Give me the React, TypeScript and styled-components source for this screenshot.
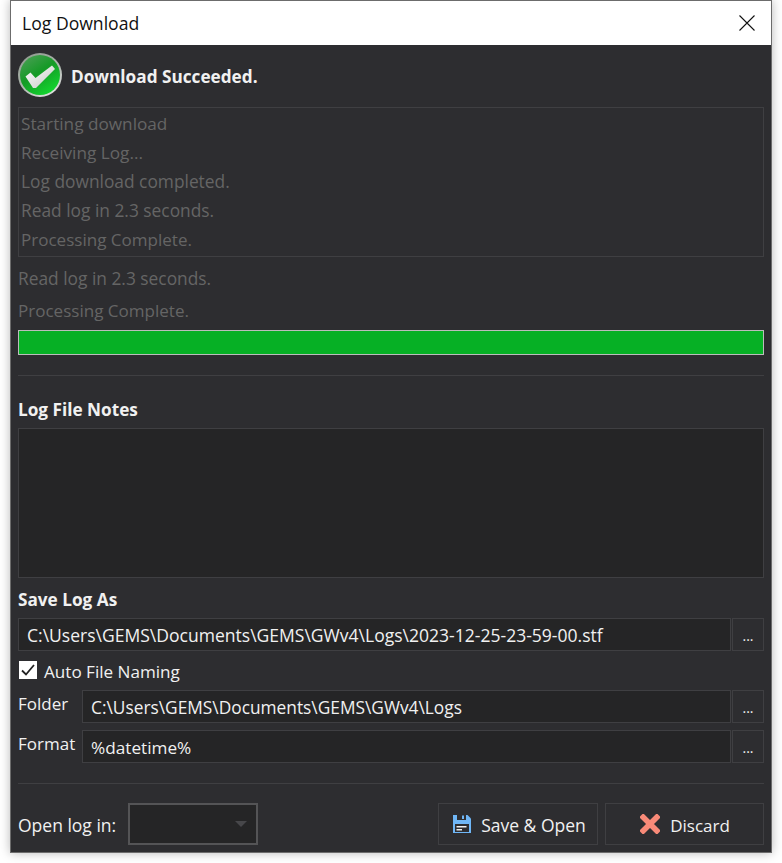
import React from "react";
import styled, { createGlobalStyle } from "styled-components";

const Global = createGlobalStyle`
  html, body { margin: 0; padding: 0; background: #fff; }
  body { font-family: "Open Sans", "Noto Sans", "Liberation Sans", sans-serif; font-size: 17px; }
`;

const Page = styled.div`
  width: 782px;
  height: 863px;
  padding: 0 10px;
  box-sizing: border-box;
  overflow: hidden;
  background: #fff;
`;

const Window = styled.div`
  width: 762px;
  height: 853px;
  box-sizing: border-box;
  border: 1px solid #6c6c6c;
  background: #2d2d30;
  display: flex;
  flex-direction: column;
  box-shadow: 0 0 10px rgba(0, 0, 0, 0.28);
`;

const TitleBar = styled.div`
  height: 44px;
  flex: none;
  background: #fff;
  color: #111;
  display: flex;
  align-items: center;
  justify-content: space-between;
  padding: 0 16px 0 11px;
  font-size: 17.6px;
`;

const Body = styled.div`
  flex: 1;
  padding: 8px 7px 0;
  display: flex;
  flex-direction: column;
  color: #f1f1f1;
`;

const Header = styled.div`
  display: flex;
  align-items: center;
  gap: 9px;
  height: 44px;
  font-weight: 700;
  font-size: 17.2px;
`;

const HeaderText = styled.span`
  padding-top: 2px;
`;

const LogBox = styled.div`
  margin-top: 10px;
  height: 150px;
  box-sizing: border-box;
  border: 1px solid #3f3f42;
  padding: 1px 2px;
  color: #656565;
`;

const LogLine = styled.div<{ $size: number }>`
  height: 29px;
  line-height: 29px;
  font-size: ${(p) => p.$size}px;
`;

const Status = styled.div<{ $top: number; $size: number }>`
  margin-top: ${(p) => p.$top}px;
  height: 24px;
  line-height: 24px;
  color: #656565;
  font-size: ${(p) => p.$size}px;
`;

const Progress = styled.div`
  margin-top: 7px;
  height: 25px;
  box-sizing: border-box;
  border: 1px solid #bcbcbc;
  background: #06b025;
`;

const Divider = styled.div<{ $top: number }>`
  margin-top: ${(p) => p.$top}px;
  height: 1px;
  background: #3f3f42;
`;

const SectionTitle = styled.div<{ $top: number }>`
  margin-top: ${(p) => p.$top}px;
  height: 24px;
  line-height: 25px;
  font-weight: 700;
  font-size: 17.2px;
`;

const Notes = styled.div`
  margin-top: 7px;
  height: 150px;
  box-sizing: border-box;
  background: #252526;
  border: 1px solid #3f3f42;
`;

const Row = styled.div<{ $top: number }>`
  margin-top: ${(p) => p.$top}px;
  display: flex;
  align-items: stretch;
  height: 33px;
`;

const FieldLabel = styled.div`
  width: 64px;
  flex: none;
  line-height: 28px;
`;

const Field = styled.div<{ $size: number }>`
  flex: 1;
  box-sizing: border-box;
  background: #252526;
  border: 1px solid #3f3f42;
  padding: 0 8px;
  line-height: 33px;
  font-size: ${(p) => p.$size}px;
  white-space: nowrap;
  overflow: hidden;
`;

const Browse = styled.div`
  width: 32px;
  margin-left: 1px;
  flex: none;
  box-sizing: border-box;
  border: 1px solid #3f3f42;
  text-align: center;
  line-height: 33px;
  font-size: 14px;
`;

const CheckRow = styled.div`
  margin-top: 10px;
  height: 18px;
  display: flex;
  align-items: center;
  gap: 7px;
  margin-left: 1px;
`;

const CheckLabel = styled.span`
  font-size: 17.1px;
  padding-top: 2px;
`;

const CheckBox = styled.div`
  width: 18px;
  height: 18px;
  background: #fff;
  display: flex;
  align-items: center;
  justify-content: center;
`;

const Footer = styled.div`
  margin-top: 19px;
  height: 42px;
  display: flex;
  align-items: stretch;
`;

const OpenLabel = styled.div`
  width: 110px;
  flex: none;
  line-height: 44px;
  font-size: 17.5px;
`;

const Combo = styled.div`
  width: 130px;
  flex: none;
  box-sizing: border-box;
  background: #252526;
  border: 2px solid #545456;
  display: flex;
  align-items: center;
  justify-content: flex-end;
  padding-right: 9px;
`;

const Caret = styled.div`
  width: 0;
  height: 0;
  border-left: 6px solid transparent;
  border-right: 6px solid transparent;
  border-top: 6px solid #47474a;
`;

const Button = styled.div<{ $width: number; $left: number; $size: number; $pad: number }>`
  width: ${(p) => p.$width}px;
  margin-left: ${(p) => p.$left}px;
  flex: none;
  box-sizing: border-box;
  border: 1px solid #3f3f42;
  display: flex;
  align-items: center;
  justify-content: center;
  gap: 10px;
  padding-left: ${(p) => p.$pad}px;
  font-size: ${(p) => p.$size}px;
`;

const ButtonText = styled.span`
  padding-top: 2px;
`;

const CheckIcon = () => (
  <svg width="44" height="44" viewBox="0 0 44 44">
    <defs>
      <linearGradient id="g" x1="0.15" y1="0" x2="0.8" y2="1">
        <stop offset="0" stopColor="#4a9f55" />
        <stop offset="0.45" stopColor="#159a26" />
        <stop offset="1" stopColor="#12dc30" />
      </linearGradient>
      <linearGradient id="r" x1="0.2" y1="0" x2="0.8" y2="1">
        <stop offset="0" stopColor="#8f9a8f" />
        <stop offset="0.6" stopColor="#b4bcb4" />
        <stop offset="1" stopColor="#e6e6e6" />
      </linearGradient>
      <linearGradient id="t" x1="0" y1="0" x2="1" y2="1">
        <stop offset="0" stopColor="#ffffff" />
        <stop offset="1" stopColor="#c4c8c4" />
      </linearGradient>
    </defs>
    <circle cx="22" cy="22" r="22" fill="url(#r)" />
    <circle cx="22" cy="22" r="20" fill="url(#g)" />
    <path d="M7.5 23.5 L12.5 19.5 L17.5 25 L34 12.5 L37 16 L18 35 L15 35 Z" fill="url(#t)" />
  </svg>
);

const CloseIcon = () => (
  <svg width="16" height="16" viewBox="0 0 16 16">
    <path d="M0.5 0.5 L15.5 15.5 M15.5 0.5 L0.5 15.5" stroke="#111" strokeWidth="1.1" fill="none" />
  </svg>
);

const SaveIcon = () => (
  <svg width="18" height="18" viewBox="0 0 18 18">
    <path d="M0 0 H14.5 L18 3.5 V18 H0 Z" fill="#6fb6f6" />
    <rect x="4" y="0" width="9" height="5" fill="#2d2d30" />
    <rect x="9" y="0.5" width="2" height="3.5" fill="#6fb6f6" />
    <rect x="2" y="9" width="14" height="8" fill="#2d2d30" />
    <rect x="3.5" y="11" width="10" height="1.5" fill="#eeeeee" />
    <rect x="3.5" y="14" width="5.5" height="1.5" fill="#eeeeee" />
  </svg>
);

const DiscardIcon = () => (
  <svg width="20" height="20" viewBox="0 0 20 20">
    <path d="M3.2 3.2 L16.8 16.8 M16.8 3.2 L3.2 16.8" stroke="#f88a78" strokeWidth="5.6" strokeLinecap="square" fill="none" />
  </svg>
);

const TickIcon = () => (
  <svg width="14" height="12" viewBox="0 0 14 12">
    <path d="M1 6.5 L5 10.5 L13 1" stroke="#222" strokeWidth="1.8" fill="none" />
  </svg>
);

const logLines = [
  { text: "Starting download", size: 17.2 },
  { text: "Receiving Log...", size: 17.2 },
  { text: "Log download completed.", size: 17.35 },
  { text: "Read log in 2.3 seconds.", size: 17.35 },
  { text: "Processing Complete.", size: 17.05 },
];

export default function App() {
  return (
    <Page>
      <Global />
      <Window>
        <TitleBar>
          <span>Log Download</span>
          <CloseIcon />
        </TitleBar>
        <Body>
          <Header>
            <CheckIcon />
            <HeaderText>Download Succeeded.</HeaderText>
          </Header>
          <LogBox>
            {logLines.map((l) => (
              <LogLine key={l.text} $size={l.size}>
                {l.text}
              </LogLine>
            ))}
          </LogBox>
          <Status $top={9} $size={17.35}>Read log in 2.3 seconds.</Status>
          <Status $top={9} $size={17.05}>Processing Complete.</Status>
          <Progress />
          <Divider $top={20} />
          <SectionTitle $top={21}>Log File Notes</SectionTitle>
          <Notes />
          <SectionTitle $top={9}>Save Log As</SectionTitle>
          <Row $top={7}>
            <Field $size={17.55}>C:\Users\GEMS\Documents\GEMS\GWv4\Logs\2023-12-25-23-59-00.stf</Field>
            <Browse>...</Browse>
          </Row>
          <CheckRow>
            <CheckBox>
              <TickIcon />
            </CheckBox>
            <CheckLabel>Auto File Naming</CheckLabel>
          </CheckRow>
          <Row $top={11}>
            <FieldLabel>Folder</FieldLabel>
            <Field $size={17.32}>C:\Users\GEMS\Documents\GEMS\GWv4\Logs</Field>
            <Browse>...</Browse>
          </Row>
          <Row $top={7}>
            <FieldLabel>Format</FieldLabel>
            <Field $size={17.2}>%datetime%</Field>
            <Browse>...</Browse>
          </Row>
          <Divider $top={20} />
          <Footer>
            <OpenLabel>Open log in:</OpenLabel>
            <Combo>
              <Caret />
            </Combo>
            <Button $width={160} $left={180} $size={17.5} $pad={3}>
              <SaveIcon />
              <ButtonText>Save &amp; Open</ButtonText>
            </Button>
            <Button $width={159} $left={7} $size={17} $pad={1}>
              <DiscardIcon />
              <ButtonText>Discard</ButtonText>
            </Button>
          </Footer>
        </Body>
      </Window>
    </Page>
  );
}
